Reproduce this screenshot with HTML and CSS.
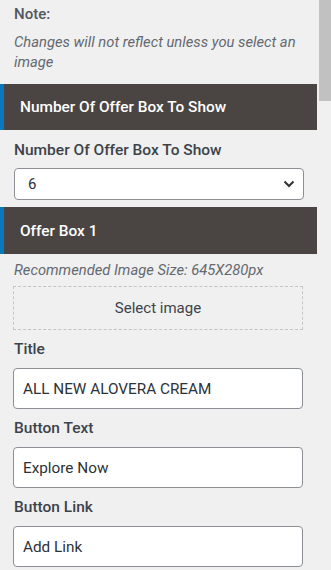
FILE: index.html
```html
<!DOCTYPE html>
<html lang="en">
  <head>
    <meta charset="UTF-8" />
    <meta name="viewport" content="width=device-width, initial-scale=1.0" />
    <title>Offer Box Settings</title>
    <link rel="stylesheet" href="styles.css">
  </head>
  <body>
    <div class="layout">
      <div class="panel">
        <div class="note">
          <p class="note-title">Note:</p>
          <p class="hint">Changes will not reflect unless you select an image</p>
        </div>

        <h2 class="section-head">Number Of Offer Box To Show</h2>

        <label class="field-label">Number Of Offer Box To Show</label>
        <div class="select-box">
          <span>6</span>
          <svg width="12" height="8" viewBox="0 0 12 8">
            <path d="M1.5 1.5 L6 6 L10.5 1.5" fill="none" stroke="#2c3338" stroke-width="2" />
          </svg>
        </div>

        <h2 class="section-head second">Offer Box 1</h2>

        <p class="hint size-hint">Recommended Image Size: 645X280px</p>
        <div class="image-picker">Select image</div>

        <label class="field-label">Title</label>
        <div class="text-input">ALL NEW ALOVERA CREAM</div>

        <label class="field-label">Button Text</label>
        <div class="text-input">Explore Now</div>

        <label class="field-label">Button Link</label>
        <div class="text-input">Add Link</div>
      </div>

      <div class="scrollbar">
        <div class="thumb"></div>
      </div>
    </div>
  </body>
</html>
```

FILE: styles.css
```css
* {
  margin: 0;
  padding: 0;
  box-sizing: border-box;
}

body {
  font-family: Roboto, "Liberation Sans", sans-serif;
  background-color: #f0f0f0;
  color: #3c434a;
  height: 570px;
  overflow: hidden;
}

.layout {
  display: flex;
  height: 570px;
}

.panel {
  width: 317px;
  padding-top: 4px;
  display: flex;
  flex-direction: column;
}

.note,
.field-label,
.select-box,
.size-hint,
.image-picker,
.text-input {
  margin-left: 14px;
  margin-right: 13px;
}

.note-title {
  font-size: 15px;
  line-height: 20px;
  font-weight: 500;
  color: #50575e;
}

.hint {
  font-size: 14.75px;
  line-height: 20px;
  font-style: italic;
  color: #646970;
}

.note .hint {
  margin-top: 8px;
}

.section-head {
  height: 46px;
  margin-top: 12px;
  background-color: #4a4543;
  border-left: 4px solid #0a78bd;
  color: #ffffff;
  font-size: 15.4px;
  font-weight: 500;
  padding-left: 16px;
  display: flex;
  align-items: center;
}

.section-head.second {
  height: 47px;
  margin-top: 7px;
}

.field-label {
  display: block;
  font-size: 15.5px;
  line-height: 20px;
  font-weight: 500;
  color: #3c434a;
  margin-top: 9px;
}

.section-head + .field-label {
  margin-top: 10px;
}

.select-box {
  height: 32px;
  margin-top: 8px;
  background-color: #ffffff;
  border: 1px solid #8c8f94;
  border-radius: 4px;
  padding: 0 8px 0 13px;
  display: flex;
  align-items: center;
  justify-content: space-between;
  font-size: 15px;
  color: #2c3338;
}

.size-hint {
  margin-top: 6px;
}

.image-picker {
  height: 44px;
  margin-top: 6px;
  margin-left: 13px;
  margin-right: 14px;
  border: 1px dashed #c3c4c7;
  display: flex;
  align-items: center;
  justify-content: center;
  font-size: 15px;
  color: #3c434a;
}

.text-input {
  height: 41px;
  margin-top: 8px;
  margin-left: 13px;
  margin-right: 14px;
  background-color: #ffffff;
  border: 1px solid #8c8f94;
  border-radius: 4px;
  padding: 0 9px;
  display: flex;
  align-items: center;
  font-size: 15.3px;
  color: #2c3338;
}

.field-label + .text-input {
  margin-top: 9px;
}

.scrollbar {
  width: 14px;
  padding-left: 2px;
  background-color: #f0f0f0;
}

.thumb {
  width: 12px;
  height: 101px;
  background-color: #c1c1c1;
}
```
